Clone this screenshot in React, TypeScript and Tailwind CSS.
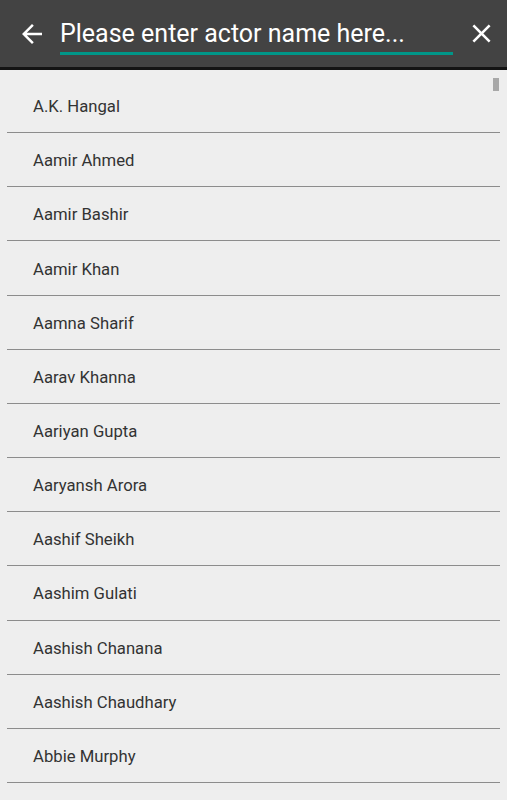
const actors = [
  'A.K. Hangal',
  'Aamir Ahmed',
  'Aamir Bashir',
  'Aamir Khan',
  'Aamna Sharif',
  'Aarav Khanna',
  'Aariyan Gupta',
  'Aaryansh Arora',
  'Aashif Sheikh',
  'Aashim Gulati',
  'Aashish Chanana',
  'Aashish Chaudhary',
  'Abbie Murphy',
];

export default function App() {
  return (
    <div className="w-[507px] h-[800px] overflow-hidden bg-[#eeeeee] font-['Roboto',sans-serif]">
      {/* search bar */}
      <div className="h-[67px] bg-[#434343] flex items-center pl-[17px] pr-[10px]">
        <button className="w-[30px] h-[30px] flex items-center justify-center text-white">
          <svg width="30" height="30" viewBox="0 0 24 24" fill="currentColor">
            <path d="M20 11H7.83l5.59-5.59L12 4l-8 8 8 8 1.41-1.41L7.83 13H20v-2z" />
          </svg>
        </button>
        <div className="ml-[13px] self-start mt-[15px] w-[393px] h-[40px] border-b-[3px] border-[#009688] flex items-center">
          <span className="text-white text-[25px] leading-none whitespace-nowrap">
            Please enter actor name here...
          </span>
        </div>
        <button className="ml-auto w-[31px] h-[31px] flex items-center justify-center text-white">
          <svg width="31" height="31" viewBox="0 0 24 24" fill="currentColor">
            <path d="M19 6.41 17.59 5 12 10.59 6.41 5 5 6.41 10.59 12 5 17.59 6.41 19 12 13.41 17.59 19 19 17.59 13.41 12z" />
          </svg>
        </button>
      </div>
      <div className="h-[3px] bg-[#141414]" />

      {/* list */}
      <div className="relative pt-[9px]">
        <div className="absolute right-[8px] top-[8px] w-[6px] h-[13px] bg-[#a8a8a8]" />
        {actors.map((name) => (
          <div key={name} className="mx-[7px] w-[493px] h-[54.17px] border-b border-[#8c8c8c] flex items-center pl-[26px] pt-[2px]">
            <span className="text-[16.7px] text-[#333333]">{name}</span>
          </div>
        ))}
      </div>
    </div>
  );
}
